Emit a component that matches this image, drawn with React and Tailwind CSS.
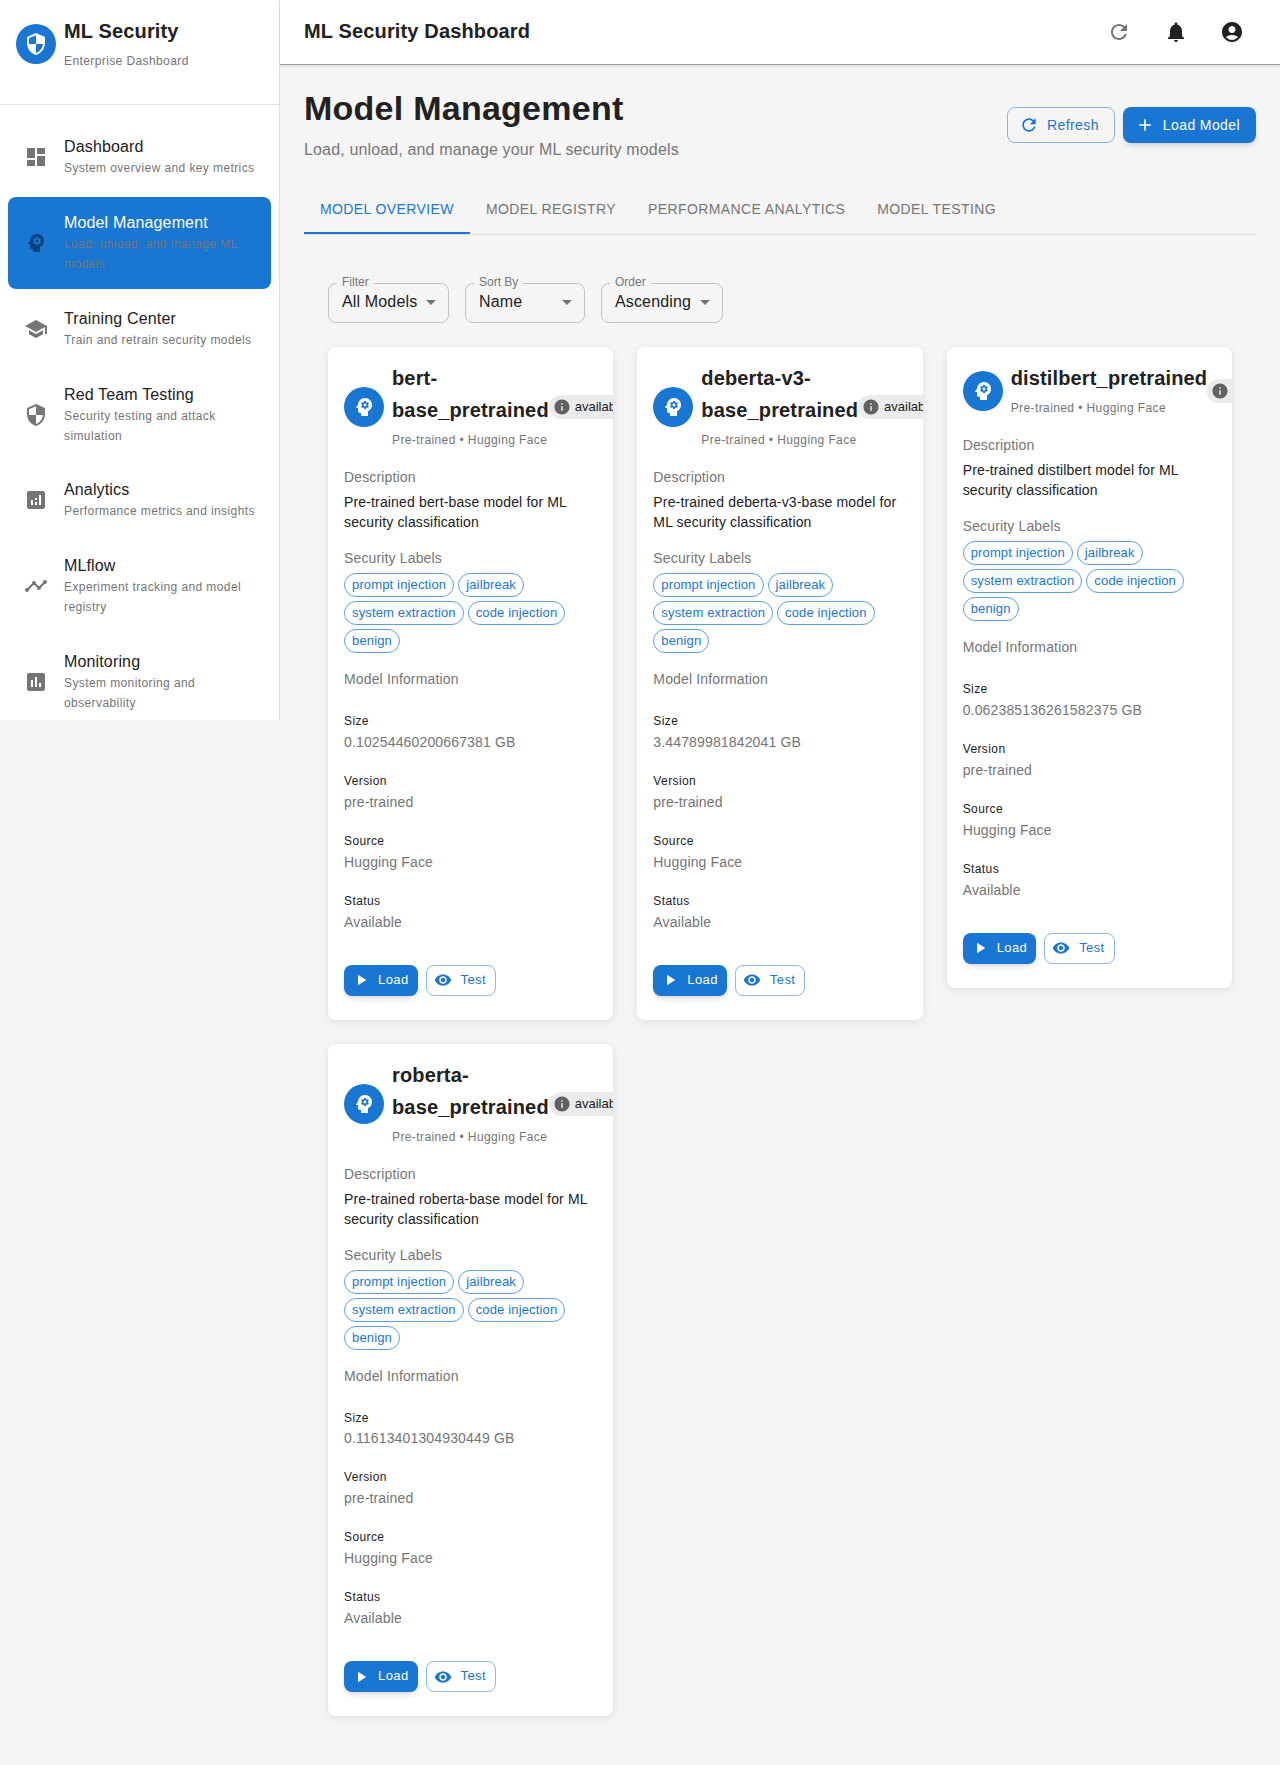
const PATHS = {
  dashboard: 'M3 13h8V3H3v10zm0 8h8v-6H3v6zm10 0h8V11h-8v10zm0-18v6h8V3h-8z',
  psychology:
    'M13 8.57c-.79 0-1.43.64-1.43 1.43s.64 1.43 1.43 1.43 1.43-.64 1.43-1.43-.64-1.43-1.43-1.43zM13 3C9.25 3 6.2 5.94 6.02 9.64L4.1 12.2c-.25.33-.01.8.4.8H6v3c0 1.1.9 2 2 2h1v3h7v-4.68c2.36-1.12 4-3.53 4-6.32 0-3.87-3.13-7-7-7zm3 7c0 .13-.01.26-.03.39l.83.66c.08.06.1.16.05.25l-.8 1.39c-.05.09-.16.12-.24.09l-.99-.4c-.21.16-.43.29-.67.39L14 13.83c-.01.1-.1.17-.2.17h-1.6c-.1 0-.18-.07-.2-.17l-.15-1.06c-.25-.1-.47-.23-.68-.39l-.99.4c-.09.03-.2 0-.25-.09l-.8-1.39c-.05-.08-.03-.19.05-.25l.84-.66c-.01-.13-.02-.26-.02-.39s.02-.27.04-.39l-.85-.66c-.08-.06-.1-.16-.05-.26l.8-1.38c.05-.09.15-.12.24-.09l1 .4c.2-.15.43-.29.67-.39L12 6.17c.02-.1.1-.17.2-.17h1.6c.1 0 .18.07.2.17l.15 1.06c.24.1.46.23.67.39l1-.4c.09-.03.2 0 .24.09l.8 1.38c.05.09.03.2-.05.26l-.85.66c.03.12.04.25.04.39z',
  school: 'M5 13.18v4L12 21l7-3.82v-4L12 17l-7-3.82zM12 3 1 9l11 6 9-4.91V17h2V9L12 3z',
  security:
    'M12 1 3 5v6c0 5.55 3.84 10.74 9 12 5.16-1.26 9-6.45 9-12V5l-9-4zm0 10.99h7c-.53 4.12-3.28 7.79-7 8.94V12H5V6.3l7-3.11v8.8z',
  analytics:
    'M19 3H5c-1.1 0-2 .9-2 2v14c0 1.1.9 2 2 2h14c1.1 0 2-.9 2-2V5c0-1.1-.9-2-2-2zM9 17H7v-5h2v5zm4 0h-2v-3h2v3zm0-5h-2v-2h2v2zm4 5h-2V7h2v10z',
  assessment:
    'M19 3H5c-1.1 0-2 .9-2 2v14c0 1.1.9 2 2 2h14c1.1 0 2-.9 2-2V5c0-1.1-.9-2-2-2zM9 17H7v-7h2v7zm4 0h-2V7h2v10zm4 0h-2v-4h2v4z',
  timeline:
    'M23 8c0 1.1-.9 2-2 2-.18 0-.35-.02-.51-.07l-3.56 3.55c.05.16.07.34.07.52 0 1.1-.9 2-2 2s-2-.9-2-2c0-.18.02-.36.07-.52l-2.55-2.55c-.16.05-.34.07-.52.07s-.36-.02-.52-.07l-4.55 4.56c.05.16.07.33.07.51 0 1.1-.9 2-2 2s-2-.9-2-2 .9-2 2-2c.18 0 .35.02.51.07l4.56-4.55C8.02 9.36 8 9.18 8 9c0-1.1.9-2 2-2s2 .9 2 2c0 .18-.02.36-.07.52l2.55 2.55c.16-.05.34-.07.52-.07s.36.02.52.07l3.55-3.56C19.02 8.35 19 8.18 19 8c0-1.1.9-2 2-2s2 .9 2 2z',
  refresh:
    'M17.65 6.35C16.2 4.9 14.21 4 12 4c-4.42 0-7.99 3.58-7.99 8s3.57 8 7.99 8c3.73 0 6.84-2.55 7.73-6h-2.08c-.82 2.33-3.04 4-5.65 4-3.31 0-6-2.69-6-6s2.69-6 6-6c1.66 0 3.14.69 4.22 1.78L13 11h7V4l-2.35 2.35z',
  bell: 'M12 22c1.1 0 2-.9 2-2h-4c0 1.1.89 2 2 2zm6-6v-5c0-3.07-1.64-5.64-4.5-6.32V4c0-.83-.67-1.5-1.5-1.5s-1.5.67-1.5 1.5v.68C7.63 5.36 6 7.92 6 11v5l-2 2v1h16v-1l-2-2z',
  account:
    'M12 2C6.48 2 2 6.48 2 12s4.48 10 10 10 10-4.48 10-10S17.52 2 12 2zm0 4c1.93 0 3.5 1.57 3.5 3.5S13.93 13 12 13s-3.5-1.57-3.5-3.5S10.07 6 12 6zm0 14c-2.03 0-4.43-.82-6.14-2.88C7.55 15.8 9.68 15 12 15s4.45.8 6.14 2.12C16.43 19.18 14.03 20 12 20z',
  add: 'M19 13h-6v6h-2v-6H5v-2h6V5h2v6h6v2z',
  play: 'M8 5v14l11-7z',
  eye: 'M12 4.5C7 4.5 2.73 7.61 1 12c1.73 4.39 6 7.5 11 7.5s9.27-3.11 11-7.5c-1.73-4.39-6-7.5-11-7.5zM12 17c-2.76 0-5-2.24-5-5s2.24-5 5-5 5 2.24 5 5-2.24 5-5 5zm0-8c-1.66 0-3 1.34-3 3s1.34 3 3 3 3-1.34 3-3-1.34-3-3-3z',
  info: 'M12 2C6.48 2 2 6.48 2 12s4.48 10 10 10 10-4.48 10-10S17.52 2 12 2zm1 15h-2v-6h2v6zm0-8h-2V7h2v2z',
  caret: 'M7 10l5 5 5-5z',
};

function Icon({ name, className }) {
  return (
    <svg viewBox="0 0 24 24" fill="currentColor" className={className}>
      <path d={PATHS[name]} />
    </svg>
  );
}

const NAV = [
  { icon: 'dashboard', title: 'Dashboard', sub: 'System overview and key metrics' },
  { icon: 'psychology', title: 'Model Management', sub: 'Load, unload, and manage ML models', active: true },
  { icon: 'school', title: 'Training Center', sub: 'Train and retrain security models' },
  { icon: 'security', title: 'Red Team Testing', sub: 'Security testing and attack simulation' },
  { icon: 'analytics', title: 'Analytics', sub: 'Performance metrics and insights' },
  { icon: 'timeline', title: 'MLflow', sub: 'Experiment tracking and model registry' },
  { icon: 'assessment', title: 'Monitoring', sub: 'System monitoring and observability' },
];

const TABS = ['Model Overview', 'Model Registry', 'Performance Analytics', 'Model Testing'];

const SELECTS = [
  { label: 'Filter', value: 'All Models', width: 'w-[121px]' },
  { label: 'Sort By', value: 'Name', width: 'w-[120px]' },
  { label: 'Order', value: 'Ascending', width: 'w-[122px]' },
];

const LABELS = ['prompt injection', 'jailbreak', 'system extraction', 'code injection', 'benign'];

const MODELS = [
  { name: 'bert-base_pretrained', base: 'bert-base', size: '0.10254460200667381 GB' },
  { name: 'deberta-v3-base_pretrained', base: 'deberta-v3-base', size: '3.44789981842041 GB' },
  { name: 'distilbert_pretrained', base: 'distilbert', size: '0.062385136261582375 GB' },
  { name: 'roberta-base_pretrained', base: 'roberta-base', size: '0.11613401304930449 GB' },
];

function Sidebar() {
  return (
    <aside className="w-[280px] shrink-0 h-[720px] overflow-hidden bg-white border-r border-[#e0e0e0]">
      <div className="flex items-center gap-2 pt-4 pb-8 pl-4 border-b border-[#e0e0e0]">
        <div className="w-10 h-10 rounded-full bg-[#1976d2] text-white flex items-center justify-center">
          <Icon name="security" className="w-6 h-6" />
        </div>
        <div className="h-14">
          <div className="text-xl leading-[30px] font-bold tracking-[0.15px] text-[#212121]">ML Security</div>
          <div className="text-xs leading-5 mt-[5px] tracking-[0.4px] text-[#757575]">Enterprise Dashboard</div>
        </div>
      </div>
      <nav className="flex flex-col gap-1 pt-[15.9px] px-2">
        {NAV.map((item) => (
          <div
            key={item.title}
            className={`flex items-center pl-4 pr-4 py-[10px] rounded-lg ${item.active ? 'bg-[#1976d2]' : ''}`}
          >
            <div className="w-10 shrink-0">
              <Icon
                name={item.icon}
                className={`w-6 h-6 ${item.active ? 'text-[#0a4280]' : 'text-[#757575]'}`}
              />
            </div>
            <div className="py-1 min-w-0">
              <div className={`text-base leading-6 tracking-[0.15px] ${item.active ? 'text-white' : 'text-[#212121]'}`}>
                {item.title}
              </div>
              <div className="text-xs leading-[19.92px] tracking-[0.4px] text-[#757575]">{item.sub}</div>
            </div>
          </div>
        ))}
      </nav>
    </aside>
  );
}

function TopBar() {
  return (
    <header className="h-[65px] bg-white border-b border-[#9e9e9e] shadow-sm flex items-center justify-between pl-6 pr-9">
      <h1 className="text-xl font-bold text-[#212121] -mt-[2px] tracking-[0.15px]">ML Security Dashboard</h1>
      <div className="flex items-center gap-8 -mt-[1px]">
        <Icon name="refresh" className="w-6 h-6 mr-px text-[#757575]" />
        <Icon name="bell" className="w-6 h-6 text-[#212121]" />
        <Icon name="account" className="w-6 h-6 text-[#212121]" />
      </div>
    </header>
  );
}

function PageHeading() {
  return (
    <div className="flex items-start justify-between">
      <div>
        <h2 className="text-[34px] leading-[42px] -mt-[2px] font-bold tracking-[0.25px] text-[#212121]">Model Management</h2>
        <p className="text-base leading-6 mt-[9px] tracking-[0.15px] text-[#757575]">
          Load, unload, and manage your ML security models
        </p>
      </div>
      <div className="flex gap-2 mt-[18px]">
        <button className="h-9 pl-[11px] pr-[15px] flex items-center gap-2 rounded-lg border border-[#1976d2]/50 text-[#1976d2] text-sm tracking-[0.4px]">
          <Icon name="refresh" className="w-5 h-5" />
          Refresh
        </button>
        <button className="h-9 pl-3 pr-4 flex items-center gap-2 rounded-lg bg-[#1976d2] text-white text-sm tracking-[0.4px] shadow-md">
          <Icon name="add" className="w-5 h-5" />
          Load Model
        </button>
      </div>
    </div>
  );
}

function Tabs() {
  return (
    <div className="flex mt-[22px] border-b border-[#dcdcdc]">
      {TABS.map((tab, i) => (
        <div
          key={tab}
          className={`h-[50px] px-4 pt-[2px] flex items-center text-sm uppercase tracking-[0.4px] border-b-2 ${
            i === 0 ? 'text-[#1976d2] border-[#1976d2]' : 'text-[#757575] border-transparent'
          }`}
        >
          {tab}
        </div>
      ))}
    </div>
  );
}

function FakeSelect({ label, value, width }) {
  return (
    <div className={`relative h-10 ${width} rounded-lg border border-[#c4c4c4] flex items-center justify-between pl-[13px] pr-[5px]`}>
      <span className="absolute left-2 -top-[10px] px-[5px] bg-[#f5f5f5] text-xs leading-4 text-[#757575]">{label}</span>
      <span className="-mt-[2px] text-base tracking-[0.15px] text-[#212121]">{value}</span>
      <Icon name="caret" className="-mt-[2px] w-6 h-6 text-[#757575]" />
    </div>
  );
}

function InfoRow({ label, value }) {
  return (
    <div>
      <div className="text-xs leading-[19.92px] tracking-[0.4px] text-[#212121]">{label}</div>
      <div className="text-sm leading-5 tracking-[0.15px] text-[#757575]">{value}</div>
    </div>
  );
}

function ModelCard({ model }) {
  return (
    <div className="bg-white rounded-lg shadow-[0_2px_8px_rgba(0,0,0,0.1)] overflow-hidden px-4 pt-4 pb-6">
      <div className="flex items-center">
        <div className="w-10 h-10 shrink-0 mr-2 rounded-full bg-[#1976d2] text-white flex items-center justify-center">
          <Icon name="psychology" className="w-6 h-6" />
        </div>
        <div>
          <div className="-mt-px text-xl leading-8 font-bold text-[#212121] tracking-[0.15px]">{model.name}</div>
          <div className="mt-[5px] text-xs leading-[19.92px] tracking-[0.4px] text-[#757575]">Pre-trained • Hugging Face</div>
        </div>
        <div className="shrink-0 h-6 flex items-center rounded-full bg-[#ebebeb] pl-1 pr-2 gap-[4px]">
          <Icon name="info" className="w-[18px] h-[18px] text-[#616161]" />
          <span className="text-[13px] text-[#212121]">available</span>
        </div>
      </div>

      <div className="mt-4 text-sm leading-5 tracking-[0.15px] text-[#757575]">Description</div>
      <p className="mt-[5px] text-sm leading-5 tracking-[0.15px] text-[#212121]">
        Pre-trained {model.base} model for ML security classification
      </p>

      <div className="mt-4 text-sm leading-5 tracking-[0.15px] text-[#757575]">Security Labels</div>
      <div className="mt-[5px] flex flex-wrap gap-1">
        {LABELS.map((l) => (
          <span
            key={l}
            className="h-6 px-[7px] flex items-center rounded-full border border-[#1976d2]/70 text-[#1976d2] text-[13px] tracking-[0.15px]"
          >
            {l}
          </span>
        ))}
      </div>

      <div className="mt-4 text-sm leading-5 tracking-[0.15px] text-[#757575]">Model Information</div>
      <div className="mt-[23px] flex flex-col gap-5">
        <InfoRow label="Size" value={model.size} />
        <InfoRow label="Version" value="pre-trained" />
        <InfoRow label="Source" value="Hugging Face" />
        <InfoRow label="Status" value="Available" />
      </div>

      <div className="mt-[33px] flex gap-2">
        <button className="h-[31px] pl-2 pr-[9px] flex items-center gap-2 rounded-lg bg-[#1976d2] text-white text-[13px] tracking-[0.4px] shadow-md">
          <Icon name="play" className="w-[18px] h-[18px]" />
          <span className="-mt-px">Load</span>
        </button>
        <button className="h-[31px] pl-[7px] pr-[9px] flex items-center gap-[9px] rounded-lg border border-[#1976d2]/50 text-[#1976d2] text-[13px] tracking-[0.4px]">
          <Icon name="eye" className="w-[18px] h-[18px]" />
          <span className="-mt-px">Test</span>
        </button>
      </div>
    </div>
  );
}

export default function App() {
  return (
    <div className="flex items-start min-h-[1765px] bg-[#f5f5f5] font-['Liberation_Sans',Arial,sans-serif]">
      <Sidebar />
      <div className="flex-1 min-w-0">
        <TopBar />
        <main className="p-6">
          <PageHeading />
          <Tabs />
          <section className="p-6 pt-12">
            <div className="flex gap-4 mb-6">
              {SELECTS.map((s) => (
                <FakeSelect key={s.label} {...s} />
              ))}
            </div>
            <div className="grid grid-cols-3 gap-6 items-start">
              {MODELS.map((m) => (
                <ModelCard key={m.name} model={m} />
              ))}
            </div>
          </section>
        </main>
      </div>
    </div>
  );
}
